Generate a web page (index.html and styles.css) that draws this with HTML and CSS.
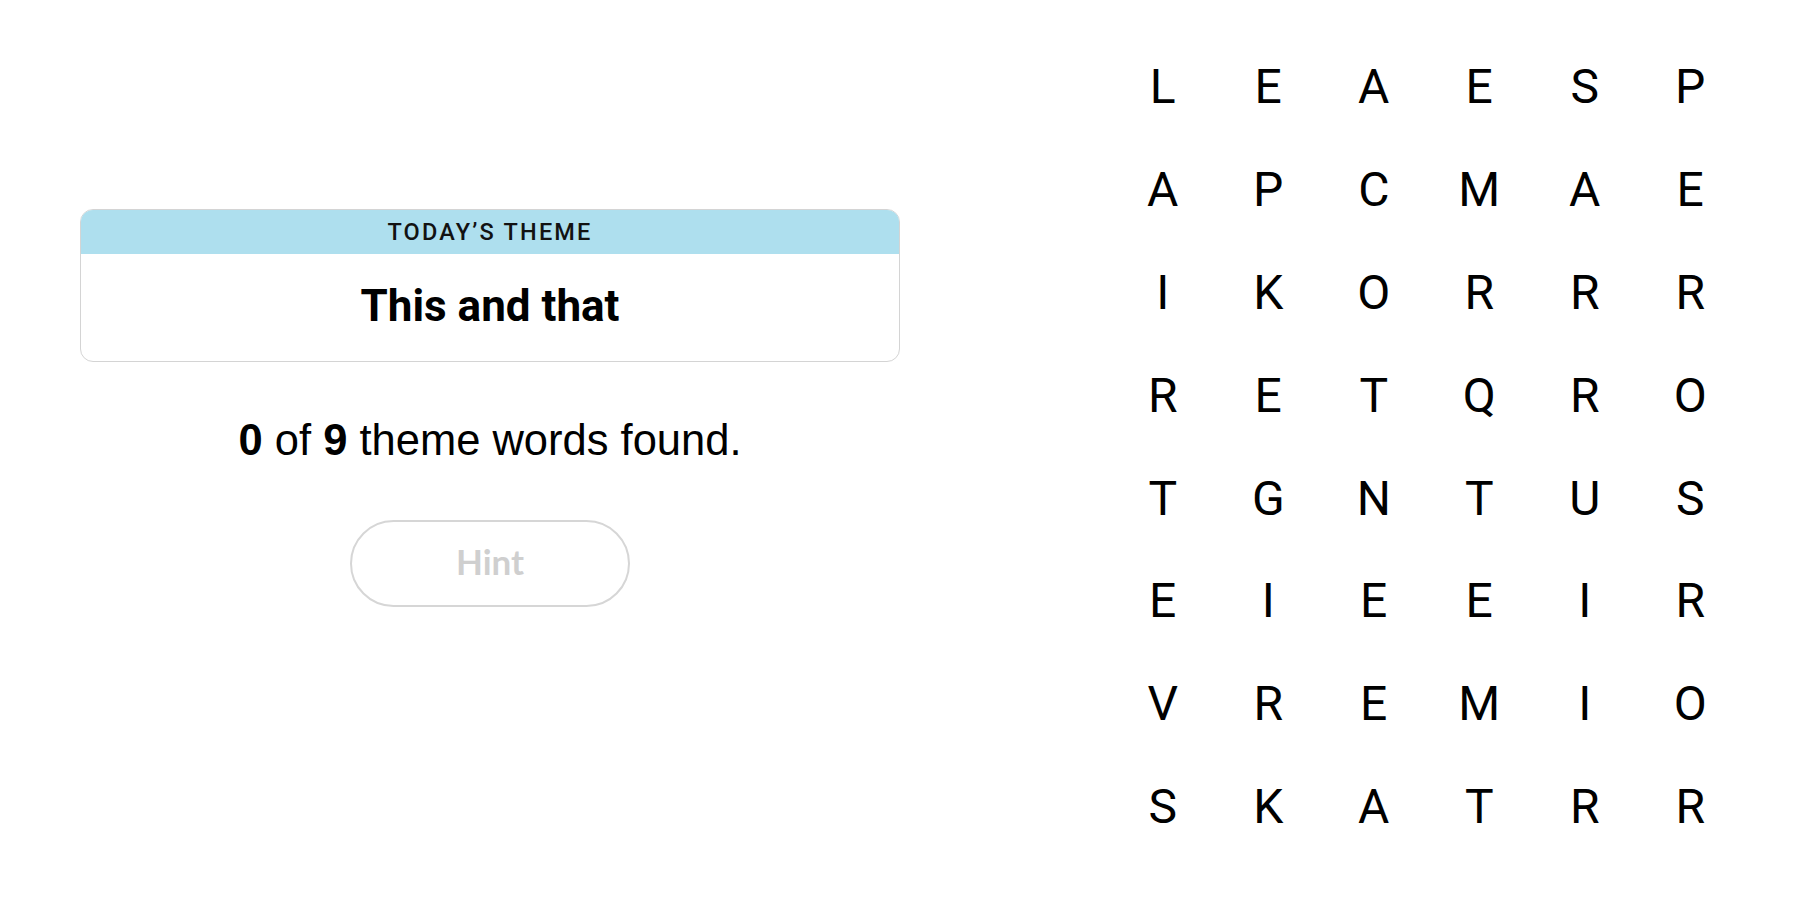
FILE: index.html
```html
<!DOCTYPE html>
<html lang="en">
<head>
<meta charset="utf-8">
<title>Strands</title>
<link rel="stylesheet" href="styles.css">
</head>
<body>
<main class="page">
  <section class="left">
    <div class="card">
      <div class="card-head">TODAY’S THEME</div>
      <div class="card-body">This and that</div>
    </div>
    <p class="count"><b>0</b> of <b>9</b> theme words found.</p>
    <button class="hint" type="button">Hint</button>
  </section>
  <section class="board">
    <span>L</span><span>E</span><span>A</span><span>E</span><span>S</span><span>P</span>
    <span>A</span><span>P</span><span>C</span><span>M</span><span>A</span><span>E</span>
    <span>I</span><span>K</span><span>O</span><span>R</span><span>R</span><span>R</span>
    <span>R</span><span>E</span><span>T</span><span>Q</span><span>R</span><span>O</span>
    <span>T</span><span>G</span><span>N</span><span>T</span><span>U</span><span>S</span>
    <span>E</span><span>I</span><span>E</span><span>E</span><span>I</span><span>R</span>
    <span>V</span><span>R</span><span>E</span><span>M</span><span>I</span><span>O</span>
    <span>S</span><span>K</span><span>A</span><span>T</span><span>R</span><span>R</span>
  </section>
</main>
</body>
</html>
```
FILE: styles.css
```css
html, body {
  margin: 0;
  padding: 0;
  background: #ffffff;
}

body {
  font-family: "Liberation Sans", Arial, sans-serif;
  color: #000000;
  width: 1800px;
  height: 900px;
  overflow: hidden;
}

.page {
  display: flex;
  height: 900px;
}

.left {
  width: 820px;
  margin-left: 80px;
  padding-top: 209px;
  display: flex;
  flex-direction: column;
  align-items: center;
  box-sizing: border-box;
}

.card {
  width: 100%;
  box-sizing: border-box;
  border: 1.5px solid #d4d4d4;
  border-radius: 13px;
  overflow: hidden;
}

.card-head {
  background: #aedfee;
  height: 44px;
  display: flex;
  align-items: center;
  justify-content: center;
  font-family: Roboto, "Liberation Sans", sans-serif;
  font-weight: 500;
  font-size: 23.5px;
  letter-spacing: 2.2px;
  color: #121212;
}

.card-body {
  height: 107px;
  display: flex;
  align-items: center;
  justify-content: center;
  font-family: Roboto, "Liberation Sans", sans-serif;
  font-weight: 700;
  font-size: 44px;
  padding-bottom: 4px;
  box-sizing: border-box;
}

.count {
  margin: 54px 0 0 0;
  font-size: 43.5px;
  line-height: 48px;
  color: #000;
}

.count b {
  font-weight: 700;
}

.hint {
  margin-top: 56px;
  width: 280px;
  height: 87px;
  border: 2px solid #d6d6d6;
  border-radius: 44px;
  background: #ffffff;
  color: #cfcfcf;
  font-family: Lato, "Liberation Sans", sans-serif;
  font-weight: 700;
  font-size: 35px;
  padding: 0 0 6px 0;
}

.board {
  margin-left: 210px;
  padding-top: 35px;
  display: grid;
  grid-template-columns: repeat(6, 105.5px);
  grid-auto-rows: 102.9px;
  align-content: start;
}

.board span {
  display: flex;
  align-items: center;
  justify-content: center;
  font-family: Roboto, "Liberation Sans", sans-serif;
  font-weight: 400;
  font-size: 48px;
  color: #000;
}
```
